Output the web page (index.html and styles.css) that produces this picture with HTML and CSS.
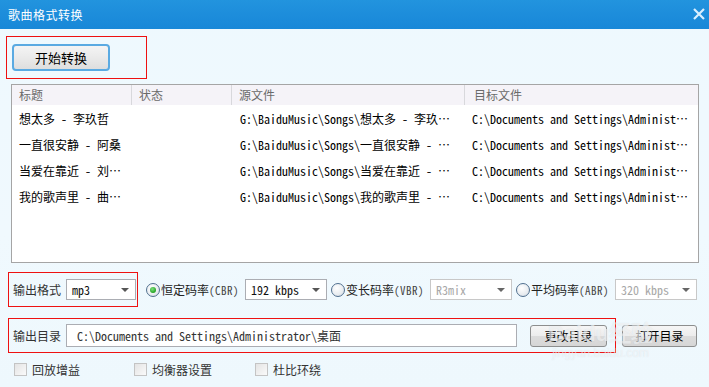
FILE: index.html
```html
<!DOCTYPE html>
<html lang="zh-CN">
<head>
    <meta charset="UTF-8">
    <title>歌曲格式转换</title>
    <link rel="stylesheet" href="styles.css">
</head>
<body>
    <div class="window">
        <div class="titlebar">
            <span class="title">歌曲格式转换</span>
            <svg class="close" width="12" height="12" viewBox="0 0 12 12">
                <path d="M1 1 L11 11 M11 1 L1 11" stroke="#d8efff" stroke-width="2.2"/>
            </svg>
        </div>

        <div class="content">
            <div class="toolbar hl">
                <button class="btn btn-start">开始转换</button>
            </div>

            <div class="list">
                <div class="row head">
                    <div class="c1">标题</div>
                    <div class="c2">状态</div>
                    <div class="c3">源文件</div>
                    <div class="c4">目标文件</div>
                </div>
                <div class="row mono">
                    <div class="c1">想太多 - 李玖哲</div>
                    <div class="c2"></div>
                    <div class="c3">G:\BaiduMusic\Songs\想太多 - 李玖哲.mp3</div>
                    <div class="c4">C:\Documents and Settings\Administrator\桌面\想太多 - 李玖哲.mp3</div>
                </div>
                <div class="row mono">
                    <div class="c1">一直很安静 - 阿桑</div>
                    <div class="c2"></div>
                    <div class="c3">G:\BaiduMusic\Songs\一直很安静 - 阿桑.mp3</div>
                    <div class="c4">C:\Documents and Settings\Administrator\桌面\一直很安静 - 阿桑.mp3</div>
                </div>
                <div class="row mono">
                    <div class="c1">当爱在靠近 - 刘若英</div>
                    <div class="c2"></div>
                    <div class="c3">G:\BaiduMusic\Songs\当爱在靠近 - 刘若英.mp3</div>
                    <div class="c4">C:\Documents and Settings\Administrator\桌面\当爱在靠近 - 刘若英.mp3</div>
                </div>
                <div class="row mono">
                    <div class="c1">我的歌声里 - 曲婉婷</div>
                    <div class="c2"></div>
                    <div class="c3">G:\BaiduMusic\Songs\我的歌声里 - 曲婉婷.mp3</div>
                    <div class="c4">C:\Documents and Settings\Administrator\桌面\我的歌声里 - 曲婉婷.mp3</div>
                </div>
            </div>

            <div class="options">
                <div class="hl format">
                    <span class="label">输出格式</span>
                    <div class="select sel-format"><span class="mono">mp3</span><i class="arrow"></i></div>
                </div>
                <div class="radio-item">
                    <span class="radio checked"></span>
                    <span class="radio-text">恒定码率<small class="mono">(CBR)</small></span>
                    <div class="select sel-rate"><span class="mono">192 kbps</span><i class="arrow"></i></div>
                </div>
                <div class="radio-item">
                    <span class="radio"></span>
                    <span class="radio-text">变长码率<small class="mono">(VBR)</small></span>
                    <div class="select sel-rate disabled"><span class="mono">R3mix</span><i class="arrow"></i></div>
                </div>
                <div class="radio-item">
                    <span class="radio"></span>
                    <span class="radio-text">平均码率<small class="mono">(ABR)</small></span>
                    <div class="select sel-rate disabled"><span class="mono">320 kbps</span><i class="arrow"></i></div>
                </div>
            </div>

            <div class="output">
                <div class="hl outdir">
                    <span class="label">输出目录</span>
                    <div class="path-input mono">C:\Documents and Settings\Administrator\桌面</div>
                    <button class="btn btn-small">更改目录</button>
                </div>
                <button class="btn btn-small">打开目录</button>
            </div>

            <div class="checks">
                <label class="check"><span class="box"></span>回放增益</label>
                <label class="check"><span class="box"></span>均衡器设置</label>
                <label class="check"><span class="box"></span>杜比环绕</label>
            </div>
        </div>

        <div class="watermark">
            <span class="wm-logo">Bai<span class="wm-paw">du</span>经验</span>
            <span class="wm-url">jingyan.baidu.com</span>
        </div>
    </div>
</body>
</html>
```

FILE: styles.css
```css
body {
    margin: 0;
    font-family: "Noto Sans CJK SC", "Liberation Sans", sans-serif;
    font-size: 12px;
    color: #111;
}

.window {
    position: relative;
    width: 709px;
    height: 387px;
    overflow: hidden;
    background: linear-gradient(180deg, #eef9fe 0%, #f0f9fe 60%, #eef8fd 100%);
}

.mono {
    font-family: "Noto Sans Mono CJK SC", "Liberation Mono", "Noto Sans CJK SC", monospace;
}

/* title bar */
.titlebar {
    height: 29px;
    display: flex;
    align-items: center;
    justify-content: space-between;
    padding: 0 4px 0 8px;
    background: linear-gradient(180deg, #2294de 0%, #1d8ddb 50%, #1888d8 100%);
}

.title {
    color: #fff;
    font-size: 12px;
    letter-spacing: 0.5px;
}

.close {
    margin-top: -1px;
}

.content {
    display: flex;
    flex-direction: column;
    align-items: flex-start;
}

.hl {
    border: 1px solid #ee1111;
    box-sizing: border-box;
}

/* buttons */
.btn {
    font-family: "Noto Sans CJK SC", sans-serif;
    font-size: 12px;
    color: #000;
    border: 1px solid #8d8e8e;
    border-radius: 3px;
    background: linear-gradient(180deg, #f6f6f6 0%, #ececec 50%, #dcdcdc 51%, #d6d6d6 100%);
    padding: 0;
}

.toolbar {
    margin: 7px 0 0 6px;
    width: 141px;
    height: 43px;
    padding: 7px 0 0 5px;
}

.btn-start {
    width: 98px;
    height: 27px;
    border: 2px solid #5aaae2;
    border-radius: 4px;
    font-size: 13px;
    display: block;
    background: linear-gradient(180deg, #f4f4f4 0%, #eaeaea 50%, #dedede 100%);
}

/* list */
.list {
    margin: 5px 0 0 11px;
    width: 688px;
    height: 179px;
    box-sizing: border-box;
    border: 1px solid #a5a5a5;
    background: #fff;
}

.row {
    display: grid;
    grid-template-columns: 119px 100px 233px 1fr;
    height: 26px;
    align-items: center;
    font-size: 12px;
    color: #000;
}

.row > div {
    white-space: nowrap;
    overflow: hidden;
    text-overflow: ellipsis;
    padding-left: 7px;
    padding-right: 6px;
}

.row.head {
    height: 20px;
    background: #f5f3f8;
    color: #6a6a6a;
}

.row.head > div {
    border-left: 1px solid #d8d8dc;
    line-height: 20px;
}

.row.head > div.c1 {
    border-left: none;
}

.row .c3 {
    padding-left: 9px;
}

.row .c4 {
    padding-left: 8px;
}

.row.head .c3 {
    padding-left: 7px;
}

.row.head .c4 {
    padding-left: 9px;
}

/* options */
.options {
    margin: 9px 0 0 8px;
    display: flex;
    align-items: center;
}

.format {
    width: 130px;
    height: 35px;
    display: flex;
    align-items: center;
    padding-left: 4px;
}

.label {
    color: #333;
    width: 53px;
}

.select {
    box-sizing: border-box;
    height: 21px;
    border: 1px solid #abadb3;
    background: #fff;
    display: flex;
    align-items: center;
    justify-content: space-between;
    padding: 0 6px 0 5px;
}

.select .mono {
    font-size: 12px;
}

.select.disabled {
    color: #a8a8a8;
    border-color: #c8c8c8;
}

.sel-format {
    width: 70px;
}

.sel-rate {
    width: 82px;
    margin-left: 4px;
}

.arrow {
    width: 0;
    height: 0;
    border-left: 4px solid transparent;
    border-right: 4px solid transparent;
    border-top: 4px solid #555;
}

.select.disabled .arrow {
    border-top-color: #666;
}

.radio-item {
    display: flex;
    align-items: center;
    margin-left: 8px;
}

.radio-item + .radio-item {
    margin-left: 4px;
}

.radio {
    box-sizing: border-box;
    width: 14px;
    height: 14px;
    border: 1px solid #51708f;
    border-radius: 50%;
    background: radial-gradient(circle at 40% 35%, #ffffff 0%, #e8ecf0 60%, #c9d2dc 100%);
    position: relative;
}

.radio.checked::after {
    content: "";
    position: absolute;
    left: 3px;
    top: 3px;
    width: 6px;
    height: 6px;
    border-radius: 50%;
    background: radial-gradient(circle at 40% 35%, #7fe07f 0%, #22a322 70%, #148a14 100%);
}

.radio-text {
    width: 80px;
    margin-left: 1px;
    color: #222;
    white-space: nowrap;
}

.radio-text small {
    font-size: 11px;
    color: #444;
    letter-spacing: 0.5px;
}

/* output dir */
.output {
    margin: 11px 0 0 8px;
    display: flex;
    align-items: center;
}

.outdir {
    width: 608px;
    height: 35px;
    display: flex;
    align-items: center;
    padding-left: 4px;
}

.path-input {
    box-sizing: border-box;
    width: 451px;
    height: 23px;
    border: 1px solid #abadb3;
    background: #fff;
    padding-left: 10px;
    line-height: 21px;
    color: #333;
    font-size: 12px;
}

.btn-small {
    width: 77px;
    height: 22px;
}

.outdir .btn-small {
    margin-left: 13px;
}

.output > .btn-small {
    margin-left: 6px;
    width: 75px;
}

/* checkboxes */
.checks {
    margin: 8px 0 0 14px;
    display: grid;
    grid-template-columns: 120px 121px 120px;
}

.check {
    display: flex;
    align-items: center;
    color: #333;
}

.box {
    box-sizing: border-box;
    width: 13px;
    height: 13px;
    border: 1px solid #c4c4c4;
    background: linear-gradient(135deg, #e4e4e4 0%, #fafafa 100%);
    margin-right: 5px;
}

/* watermark */
.watermark {
    position: absolute;
    left: 548px;
    top: 322px;
    display: flex;
    flex-direction: column;
    align-items: center;
    pointer-events: none;
    color: rgba(255, 255, 255, 0.55);
    text-shadow: 0 0 1px rgba(170, 180, 190, 0.35);
}

.wm-logo {
    font-family: "Liberation Sans", sans-serif;
    font-size: 22px;
    font-weight: bold;
    line-height: 24px;
}

.wm-url {
    font-family: "Liberation Sans", sans-serif;
    font-size: 12px;
}
```
